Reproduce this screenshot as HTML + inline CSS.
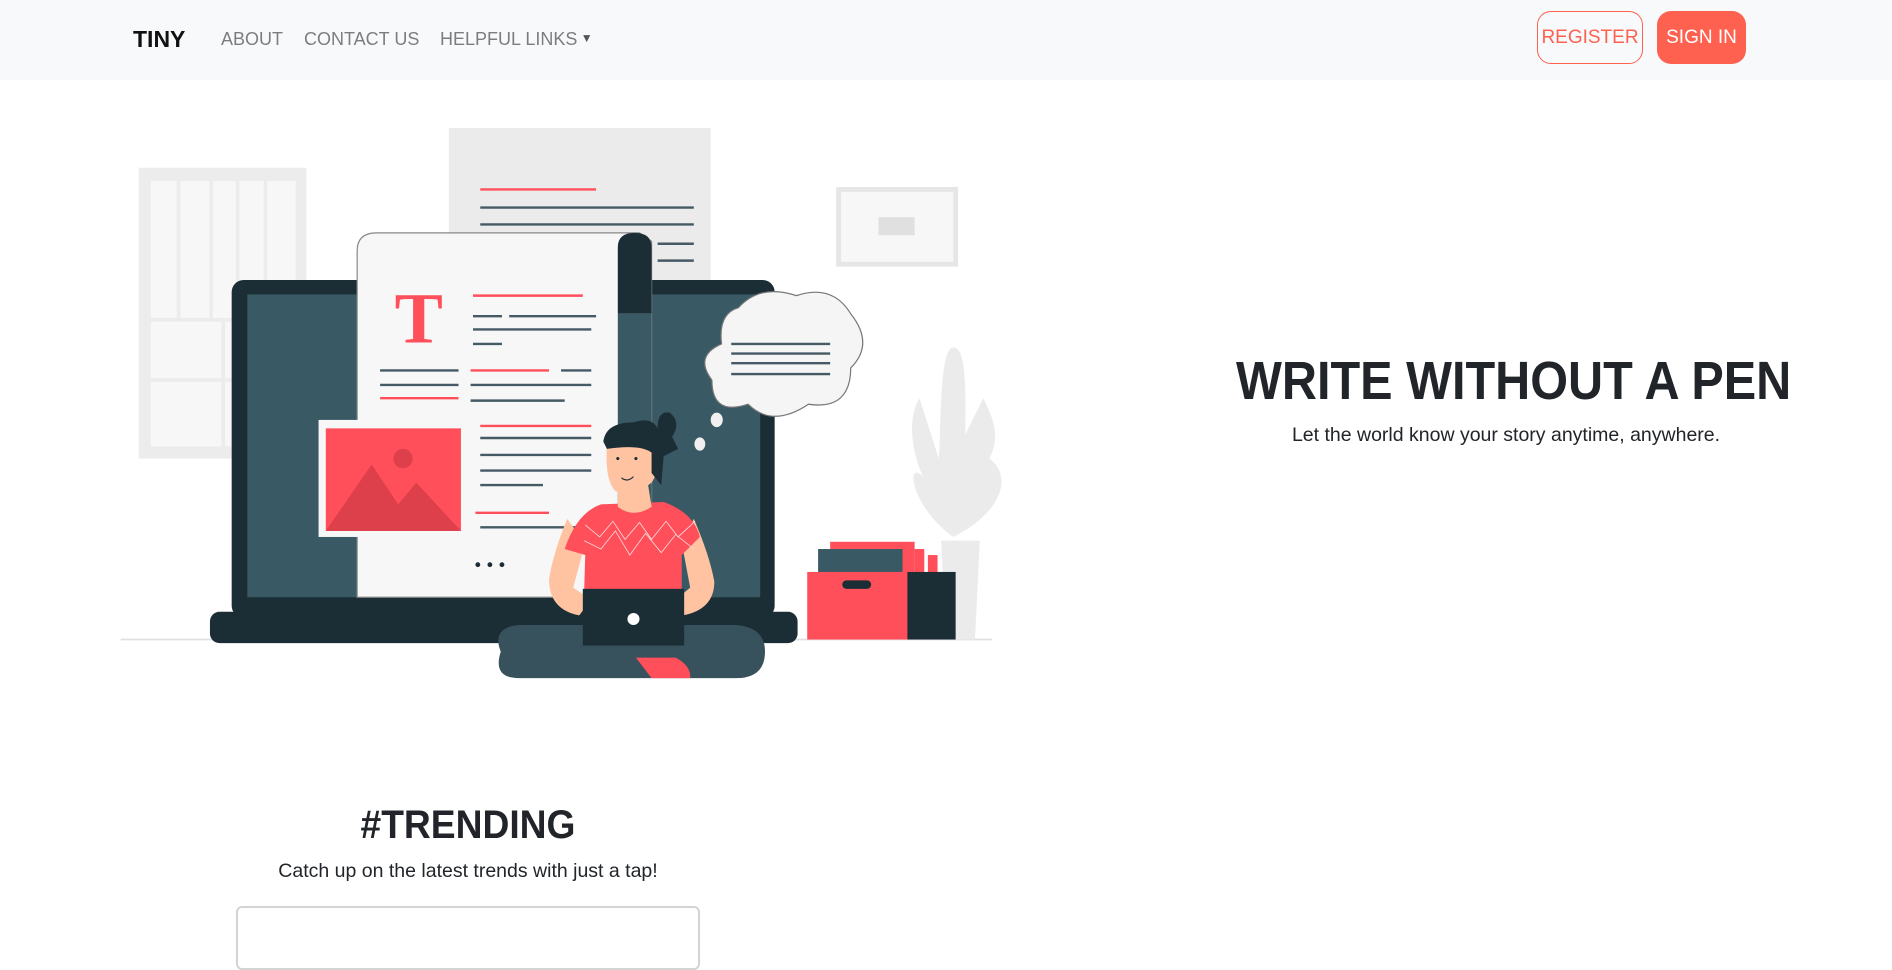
<!DOCTYPE html>
<html><head><meta charset="utf-8"><style>
html,body{margin:0;padding:0;width:1892px;height:936px;overflow:hidden;background:#fff;font-family:"Liberation Sans",sans-serif;color:#212529}
.nav{position:absolute;left:0;top:0;width:1892px;height:80px;background:#f8f9fa}
.nav span{position:absolute;top:29px;font-size:18px;color:rgba(0,0,0,.5)}
.brand{position:absolute;left:133px;top:26px;font-size:23px;font-weight:bold;color:#111}
.btn{position:absolute;top:11px;height:53px;border-radius:14px;box-sizing:border-box;font-size:19px;display:flex;align-items:center;justify-content:center}
svg.ill{position:absolute;left:0;top:0}
h1{position:absolute;margin:0;left:1206px;width:600px;top:350px;text-align:center;font-size:54px;transform:scaleX(0.9);white-space:nowrap}
.sub{position:absolute;left:1156px;width:700px;top:424px;text-align:center;font-size:19.5px}
h2{position:absolute;margin:0;left:268px;width:400px;top:803px;text-align:center;font-size:40px;transform:scaleX(0.93)}
.sub2{position:absolute;left:218px;width:500px;top:860px;text-align:center;font-size:19.5px}
.card{position:absolute;left:236px;top:906px;width:460px;height:60px;border:2px solid #d4d4d4;border-radius:6px}
</style></head><body>
<div class="nav">
<div class="brand">TINY</div>
<span style="left:221px">ABOUT</span>
<span style="left:304px">CONTACT US</span>
<span style="left:440px">HELPFUL LINKS<span style="position:static;font-size:12px;color:#555;vertical-align:3px"> ▼</span></span>
<div class="btn" style="left:1537px;width:106px;border:1px solid #ff6150;color:#ff6150">REGISTER</div>
<div class="btn" style="left:1657px;width:89px;background:#ff6150;color:#fff">SIGN IN</div>
</div>
<svg class="ill" width="1892" height="936" viewBox="0 0 1568 775.7">
<rect x="115" y="139" width="139" height="241" fill="#ececec"/>
<rect x="125" y="150" width="120" height="220" fill="#f7f7f7"/>
<g stroke="#ececec" stroke-width="3"><line x1="148" y1="150" x2="148" y2="265"/><line x1="175" y1="150" x2="175" y2="265"/><line x1="197" y1="150" x2="197" y2="265"/><line x1="220" y1="150" x2="220" y2="265"/><line x1="185" y1="265" x2="185" y2="370"/><line x1="125" y1="265" x2="245" y2="265"/><line x1="125" y1="315" x2="245" y2="315"/></g>
<rect x="372" y="106" width="217" height="130" fill="#ebebeb"/>
<g stroke="#455a64" stroke-width="2"><line x1="398" y1="172" x2="575" y2="172"/><line x1="398" y1="186" x2="575" y2="186"/><line x1="545" y1="202" x2="575" y2="202"/><line x1="545" y1="216" x2="575" y2="216"/></g>
<line x1="398" y1="157" x2="494" y2="157" stroke="#ff4f5a" stroke-width="2"/>
<rect x="695" y="157" width="97" height="62" fill="#f7f7f7" stroke="#e6e6e6" stroke-width="4"/>
<rect x="728" y="180" width="30" height="15" fill="#e0e0e0"/>
<line x1="100" y1="530" x2="822" y2="530" stroke="#e0e0e0" stroke-width="1.5"/>
<path d="M790 288 C778 288 780 360 778 380 L762 330 C750 350 758 380 765 395 C750 380 755 420 790 445 C830 425 840 395 820 380 C830 360 822 345 815 330 L800 360 C800 330 802 288 790 288Z" fill="#ebebeb"/>
<path d="M780 448 L812 448 L808 530 L784 530Z" fill="#ebebeb"/>
<rect x="192" y="232" width="450" height="280" rx="10" fill="#1c2e35"/>
<rect x="205" y="244" width="425" height="251" fill="#395a64"/>
<rect x="174" y="507" width="487" height="26" rx="8" fill="#1c2e35"/>
<path d="M296 495 L296 208 Q296 193 312 193 L530 193 L540 200 L540 495Z" fill="#f7f7f7" stroke="#888" stroke-width="1"/>
<path d="M512 495 L512 205 Q512 193 526 193 Q540 193 540 205 L540 260 L512 260Z" fill="#1c2e35"/>
<rect x="512" y="260" width="28" height="235" fill="#395a64"/>
<text x="327" y="284" font-family="Liberation Serif,serif" font-weight="bold" font-size="60" fill="#ff4f5a">T</text>
<g stroke="#455a64" stroke-width="2">
<line x1="392" y1="262" x2="416" y2="262"/><line x1="422" y1="262" x2="494" y2="262"/><line x1="392" y1="273" x2="490" y2="273"/><line x1="392" y1="285" x2="416" y2="285"/>
<line x1="315" y1="307" x2="380" y2="307"/><line x1="465" y1="307" x2="490" y2="307"/><line x1="315" y1="319" x2="380" y2="319"/><line x1="390" y1="319" x2="490" y2="319"/><line x1="390" y1="332" x2="468" y2="332"/>
<line x1="398" y1="363" x2="490" y2="363"/><line x1="398" y1="377" x2="490" y2="377"/><line x1="398" y1="390" x2="490" y2="390"/><line x1="398" y1="402" x2="450" y2="402"/><line x1="398" y1="437" x2="490" y2="437"/></g>
<g stroke="#ff4f5a" stroke-width="2"><line x1="392" y1="245" x2="483" y2="245"/><line x1="390" y1="307" x2="455" y2="307"/><line x1="315" y1="330" x2="380" y2="330"/><line x1="398" y1="353" x2="490" y2="353"/><line x1="394" y1="425" x2="455" y2="425"/></g>
<circle cx="396" cy="468" r="2" fill="#1c2e35"/><circle cx="406" cy="468" r="2" fill="#1c2e35"/><circle cx="416" cy="468" r="2" fill="#1c2e35"/>
<rect x="264" y="348" width="120" height="97" fill="#f7f7f7"/>
<rect x="270" y="355" width="112" height="85" fill="#ff4f5a"/>
<circle cx="334" cy="380" r="8" fill="#dd3f4b"/>
<path d="M270 440 L308 385 L330 418 L345 400 L382 440Z" fill="#dd3f4b"/>
<path d="M612 255 Q630 235 660 245 Q690 235 705 260 Q725 285 705 305 Q705 340 670 335 Q640 355 620 335 Q590 345 590 315 Q575 295 598 285 Q595 260 612 255Z" fill="#f5f5f5" stroke="#777" stroke-width="1"/>
<g stroke="#455a64" stroke-width="2"><line x1="606" y1="285" x2="688" y2="285"/><line x1="606" y1="293" x2="688" y2="293"/><line x1="606" y1="301" x2="688" y2="301"/><line x1="606" y1="310" x2="688" y2="310"/></g>
<ellipse cx="594" cy="348" rx="5" ry="6" fill="#f0f0f0"/><ellipse cx="580" cy="368" rx="4.5" ry="5.5" fill="#f0f0f0"/>
<rect x="688" y="449" width="70" height="25" fill="#ff4f5a"/>
<rect x="678" y="455" width="70" height="25" fill="#395a64"/>
<rect x="758" y="455" width="8" height="20" fill="#ff4f5a"/><rect x="769" y="460" width="8" height="15" fill="#ff4f5a"/>
<rect x="669" y="474" width="84" height="56" fill="#ff4f5a"/>
<rect x="752" y="474" width="40" height="56" fill="#1c2e35"/>
<rect x="698" y="481" width="24" height="7" rx="3.5" fill="#1c2e35"/>
<path d="M415 540 Q407 520 430 518 L610 518 Q634 520 634 540 Q634 562 610 562 L430 562 Q408 562 415 540Z" fill="#37525c"/>
<path d="M527 545 L560 545 Q573 552 572 562 L540 562Z" fill="#ff4f5a"/>
<path d="M470 430 Q458 460 455 480 Q455 505 480 510 L490 497 L475 487 L485 450Z" fill="#ffc3a1"/>
<path d="M575 430 Q588 460 592 482 Q592 505 566 510 L560 497 L572 487 L565 450Z" fill="#ffc3a1"/>
<path d="M498 418 L550 416 Q575 425 580 445 L565 460 L565 495 L484 495 L485 460 L468 455 Q478 425 498 418Z" fill="#ff4f5a"/>
<path d="M485 435 L497 445 L508 432 L518 447 L530 433 L540 447 L552 432 L562 445 L576 432 M484 448 L498 455 L510 440 L522 460 L535 442 L548 458 L560 443 L575 455" stroke="#ffd6d6" stroke-width="0.7" fill="none"/>
<path d="M512 395 L512 420 Q525 430 540 420 L536 395Z" fill="#ffc3a1"/>
<path d="M503 368 Q501 398 510 407 Q525 412 540 400 Q548 388 545 372 Z" fill="#ffc3a1"/>
<path d="M500 366 Q502 350 525 350 Q540 345 545 355 Q545 340 555 342 Q565 350 557 362 L562 372 L550 378 L548 402 L540 392 L540 375 Q530 368 503 372Z" fill="#1c2e35"/>
<circle cx="512" cy="380" r="1.3" fill="#1c2e35"/><circle cx="527" cy="380" r="1.3" fill="#1c2e35"/>
<path d="M515 396 Q520 400 525 395" stroke="#1c2e35" stroke-width="1" fill="none"/>
<rect x="483" y="488" width="84" height="47" fill="#1c2e35"/>
<circle cx="525" cy="513" r="5" fill="#fff"/>
</svg>
<h1>WRITE WITHOUT A PEN</h1>
<div class="sub">Let the world know your story anytime, anywhere.</div>
<h2>#TRENDING</h2>
<div class="sub2">Catch up on the latest trends with just a tap!</div>
<div class="card"></div>
</body></html>
